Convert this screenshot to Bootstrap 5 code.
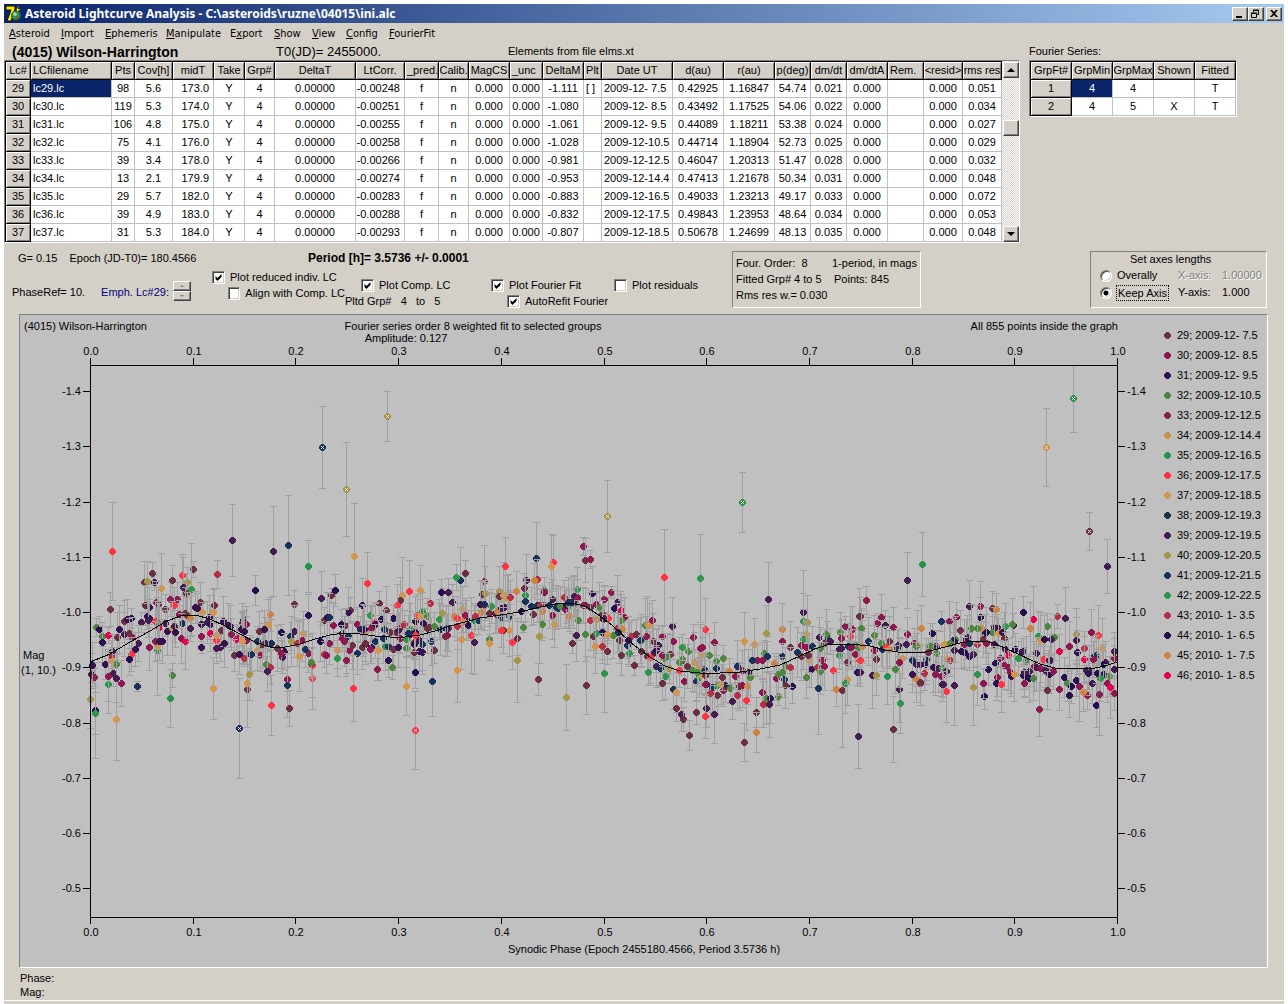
<!DOCTYPE html>
<html lang="en">
<head>
<meta charset="utf-8">
<meta name="viewport" content="width=device-width, initial-scale=1">
<title>Asteroid Lightcurve Analysis - C:\asteroids\ruzne\04015\ini.alc</title>
<link href="https://cdn.jsdelivr.net/npm/bootstrap@5.3.0/dist/css/bootstrap.min.css" rel="stylesheet">
<script src="https://cdn.jsdelivr.net/npm/bootstrap@5.3.0/dist/js/bootstrap.bundle.min.js"></script>
<style>
:root{--face:#d4d0c8;--navy:#0a246a;--shade:#808080}
body{background:#fff;color:#000;font-family:"Liberation Sans",Arial,sans-serif;font-size:11px;line-height:14px}
.app-window{background:var(--face);margin:4px 4px 0;min-height:calc(100vh - 4px)}
.title-bar{height:19px;background:linear-gradient(90deg,#0a246a,#a6caf0);color:#fff;font:bold 12px/19px "Noto Sans",sans-serif;padding:0 2px 0 1px}
.title-bar svg{width:17px;height:17px;margin-right:3px}
.win-btn{width:16px;height:14px;padding:0;background:var(--face);border:1px solid;border-color:#fff #404040 #404040 #fff;box-shadow:inset -1px -1px var(--shade);display:block;line-height:0;border-radius:0}
.win-btn svg{width:14px;height:12px;margin:0;display:block}
.win-close{margin-left:2px}
.menu-strip{display:grid;grid-template-columns:52px 44px 61px 64px 44px 38px 34px 43px auto;height:22px;padding-left:5px;font:11px/21px "DejaVu Sans Condensed","DejaVu Sans",sans-serif}
.menu-strip a{color:#000;text-decoration:none}
.menu-strip a::first-letter{text-decoration:underline}
.menu-strip .mid-key::first-letter{text-decoration:none}
.caption-row{height:15px;line-height:13px;white-space:nowrap}
.obj-name{font:bold 14px/15px "Liberation Sans",sans-serif;width:272px;padding-left:8px}
.epoch-zero{font-size:13px;line-height:14px;width:232px}
.sunken{border:1px solid;border-color:var(--shade) #fff #fff var(--shade)}
.grid-wrap{border:1px solid;border-color:var(--shade) #fff #fff var(--shade);background:#fff}
.data-grid{table-layout:fixed;border-collapse:separate;border-spacing:0;border-left:1px solid #000;border-top:1px solid #000;background:#fff}
.data-grid th,.data-grid td{font-weight:400;height:18px;line-height:17px;padding:0;text-align:center;white-space:nowrap;overflow:hidden;border-right:1px solid silver;border-bottom:1px solid silver}
.data-grid th{background:var(--face);border-right-color:#000;border-bottom-color:#000;box-shadow:inset 1px 1px #fff,inset -1px -1px var(--shade)}
.data-grid .lf{text-align:left;padding-left:2px}
.data-grid .rt{text-align:right;padding-right:4px}
.data-grid td.picked{background:var(--navy);color:#fff}
.series-list{margin-left:9px}
.scroll-rail{width:17px;padding:1px 0 0 1px;background:repeating-conic-gradient(#fff 0 25%,#d4d0c8 0 50%) 0 0/2px 2px}
.rail-btn{width:16px;height:16px;padding:0;border:1px solid;border-color:#fff #404040 #404040 #fff;background:var(--face);box-shadow:inset -1px -1px var(--shade);display:flex;align-items:center;justify-content:center}
.rail-gap{height:42px}
.ctl{display:flex;align-items:center;height:16px;white-space:nowrap}
.ctl input{appearance:none;margin:0 5px 0 0;width:13px;height:13px;background:#fff;border:1px solid;border-color:var(--shade) #fff #fff var(--shade);box-shadow:inset 1px 1px #404040,inset -1px -1px #d4d0c8}
.ctl input[type=checkbox]:checked{background:#fff url("data:image/svg+xml,%3Csvg xmlns='http://www.w3.org/2000/svg' viewBox='0 0 11 11'%3E%3Cpath d='M2.5 4v3l2 2 4-4V2l-4 4z'/%3E%3C/svg%3E")}
.ctl input[type=radio]{border-radius:50%;width:12px;height:12px}
.ctl input[type=radio]:checked{background:radial-gradient(#000 0 2px,#fff 3px)}
.spin-btn{display:block;width:18px;height:10px;padding:0;background:var(--face);border:1px solid;border-color:#fff #404040 #404040 #fff;box-shadow:inset -1px -1px var(--shade);line-height:0}
.emph{color:navy}
.fit-epoch{width:304px;padding-left:14px;white-space:nowrap}
.set-left{width:208px}
.set-a{width:133px}.set-b{width:146px}.set-c{width:123px}.set-d{width:114px}
.group-range{line-height:16px;white-space:pre}
.period{font:bold 12px/14px "Liberation Sans",sans-serif;white-space:nowrap}
.fit-info{width:189px;height:57px;padding:3px 3px;line-height:16px}
.fit-info div div:first-child{width:98px}
.axes-box{width:177px;height:57px;padding-left:9px;margin-right:17px;line-height:17px}
.axes-title{padding-left:30px;line-height:15px}
.axes-box .ctl{height:17px}
.axis-mode{width:78px}
.axis-name{width:44px}
.off{color:var(--shade);text-shadow:1px 1px #fff}
.focus-box{outline:1px dotted #000;padding:0 1px;line-height:14px}
.plot-pane{background:silver;margin:5px 16px 0 15px}
.plot-pane svg{display:block;width:100%;height:auto}
.plot-pane text{font-family:"Liberation Sans",Arial,sans-serif;font-size:11px}
.foot{padding:3px 0 1px 16px;border-bottom:1px solid #fff}
</style>
</head>
<body>
<main class="app-window">
  <header class="title-bar d-flex align-items-center">
    <svg viewBox="0 0 17 17" aria-hidden="true"><path d="M1 1h9v3L6 16H2L6 5H1z" fill="#ffe600" stroke="#111" stroke-width="1"/><circle cx="11" cy="10.500" r="4.500" fill="#2f8f50" stroke="#163" stroke-width="1"/><circle cx="10" cy="9" r="2" fill="#a5d0ad"/><path d="M11 5l3-5-1 4h3l-5 4 1-3z" fill="#ff0" stroke="#332" stroke-width=".5"/><path d="M11 11l2 1-2 3z" fill="#d22"/></svg>
    <span class="flex-grow-1 text-nowrap">Asteroid Lightcurve Analysis - C:\asteroids\ruzne\04015\ini.alc</span>
    <button class="win-btn" aria-label="Minimize"><svg viewBox="0 0 14 12"><path d="M3 8h6v2H3z"/></svg></button>
    <button class="win-btn" aria-label="Restore"><svg viewBox="0 0 14 12" fill="none" stroke="#000"><path d="M4.500 4V2.500h5v4H8M4 2h6M2.500 5.500h5v4h-5zM2 5h6"/></svg></button>
    <button class="win-btn win-close" aria-label="Close"><svg viewBox="0 0 14 12"><path d="M3 2h2l2 2 2-2h2L8 5.500 11 9H9L7 7 5 9H3l3-3.500z"/></svg></button>
  </header>
  <nav class="menu-strip">
    <a href="#">Asteroid</a><a href="#">Import</a><a href="#">Ephemeris</a><a href="#">Manipulate</a><a href="#" class="mid-key">E<u>x</u>port</a><a href="#">Show</a><a href="#">View</a><a href="#">Config</a><a href="#">FourierFit</a>
  </nav>

  <div class="d-flex align-items-start">
    <section>
      <div class="caption-row d-flex"><div class="obj-name">(4015) Wilson-Harrington</div><div class="epoch-zero">T0(JD)= 2455000.</div><div>Elements from file elms.xt</div></div>
      <div class="grid-wrap d-flex">
        <table class="data-grid" id="lcGrid"></table>
        <div class="scroll-rail d-flex flex-column">
          <button class="rail-btn" aria-label="Scroll up"><svg width="8" height="4"><path d="M0 4l4-4 4 4z"/></svg></button>
          <div class="rail-gap"></div>
          <button class="rail-btn" aria-label="Scroll thumb"></button>
          <button class="rail-btn mt-auto" aria-label="Scroll down"><svg width="8" height="4"><path d="M0 0l4 4 4-4z"/></svg></button>
        </div>
      </div>
    </section>
    <section class="series-list">
      <div class="caption-row">Fourier Series:</div>
      <div class="grid-wrap"><table class="data-grid" id="fourierGrid"></table></div>
    </section>
  </div>

  <section class="d-flex align-items-start pt-2">
    <div>
      <div class="d-flex">
        <div class="fit-epoch d-flex"><span>G= 0.15</span><span class="ms-2 ps-1">Epoch (JD-T0)= 180.4566</span></div>
        <div class="period">Period [h]= 3.5736 +/- 0.0001</div>
      </div>
      <div class="d-flex">
        <div class="set-left d-flex pt-3 ps-2 text-nowrap">
          <span class="pt-1">PhaseRef= 10.</span>
          <span class="ms-3 pt-1 emph">Emph. Lc#29:</span>
          <span class="ms-1"><button class="spin-btn" aria-label="Next curve"><svg width="4" height="2"><path d="M0 2l2-2 2 2z" fill="#808080"/></svg></button><button class="spin-btn" aria-label="Previous curve"><svg width="4" height="2"><path d="M0 0l2 2 2-2z" fill="#808080"/></svg></button></span>
        </div>
        <div class="set-a pt-1"><label class="ctl"><input type="checkbox" checked>Plot reduced indiv. LC</label><label class="ctl ms-3"><input type="checkbox">Align with Comp. LC</label></div>
        <div class="set-b pt-2"><label class="ctl mt-1 ms-3"><input type="checkbox" checked>Plot Comp. LC</label><div class="group-range">Pltd Grp#   4   to   5</div></div>
        <div class="set-c pt-2"><label class="ctl mt-1"><input type="checkbox" checked>Plot Fourier Fit</label><label class="ctl ms-3"><input type="checkbox" checked>AutoRefit Fourier</label></div>
        <div class="set-d pt-2"><label class="ctl mt-1"><input type="checkbox">Plot residuals</label></div>
      </div>
    </div>
    <div class="ms-1"><div class="fit-info sunken text-nowrap"><div class="d-flex"><div>Four. Order:&nbsp; 8</div><div>1-period, in mags</div></div><div class="d-flex"><div>Fitted Grp# 4 to 5</div><div>Points: 845</div></div><div>Rms res w.= 0.030</div></div></div>
    <div class="axes-box sunken ms-auto text-nowrap">
      <div class="axes-title">Set axes lengths</div>
      <div class="d-flex"><div class="axis-mode"><label class="ctl"><input type="radio" name="axisMode"><span>Overally</span></label></div><div class="axis-name off">X-axis:</div><div class="off">1.00000</div></div>
      <div class="d-flex"><div class="axis-mode"><label class="ctl"><input type="radio" name="axisMode" checked><span class="focus-box">Keep Axis</span></label></div><div class="axis-name">Y-axis:</div><div>1.000</div></div>
    </div>
  </section>

  <section class="plot-pane sunken"><svg id="plot" viewBox="20 316 1247 652" role="img" aria-label="Composite lightcurve"></svg></section>
  <footer class="foot"><div>Phase:</div><div>Mag:</div></footer>
</main>
<script>
function buildGrid(id, heads, widths, aligns, rows){
  const t=document.getElementById(id);
  t.style.width=(widths.reduce((a,b)=>a+b)+1)+'px';
  const esc=s=>s.replace('<','&lt;').replace('>','&gt;');
  t.innerHTML='<colgroup>'+widths.map(w=>`<col style="width:${w}px">`).join('')+'</colgroup><thead><tr>'+
    heads.map((h,i)=>`<th scope="col"${/^(LCf|_|Rem)/.test(h)?' class="lf"':''}>${esc(h)}</th>`).join('')+'</tr></thead><tbody>'+
    rows.map((r,k)=>'<tr>'+r.map((c,i)=>i==0?`<th scope="row">${c}</th>`:`<td class="${aligns[i]||''}${k==0&&i==1?' picked':''}">${c}</td>`).join('')+'</tr>').join('')+'</tbody>';
}
const L='lf',R='rt';
const lc=`29,98,5.6,173.0,-0.00248,-1.111,2009-12- 7.5,0.42925,1.16847,54.74,0.021,0.051
30,119,5.3,174.0,-0.00251,-1.080,2009-12- 8.5,0.43492,1.17525,54.06,0.022,0.034
31,106,4.8,175.0,-0.00255,-1.061,2009-12- 9.5,0.44089,1.18211,53.38,0.024,0.027
32,75,4.1,176.0,-0.00258,-1.028,2009-12-10.5,0.44714,1.18904,52.73,0.025,0.029
33,39,3.4,178.0,-0.00266,-0.981,2009-12-12.5,0.46047,1.20313,51.47,0.028,0.032
34,13,2.1,179.9,-0.00274,-0.953,2009-12-14.4,0.47413,1.21678,50.34,0.031,0.048
35,29,5.7,182.0,-0.00283,-0.883,2009-12-16.5,0.49033,1.23213,49.17,0.033,0.072
36,39,4.9,183.0,-0.00288,-0.832,2009-12-17.5,0.49843,1.23953,48.64,0.034,0.053
37,31,5.3,184.0,-0.00293,-0.807,2009-12-18.5,0.50678,1.24699,48.13,0.035,0.048`.split('\n').map((s,i)=>{
  const v=s.split(',');
  return [v[0],`lc${v[0]}.lc`,v[1],v[2],v[3],'Y','4','0.00000',v[4],'f','n','0.000','0.000',v[5],i?'':'[ ]',v[6],v[7],v[8],v[9],v[10],'0.000','','0.000',v[11]];
});
buildGrid('lcGrid',['Lc#','LCfilename','Pts','Cov[h]','midT','Take','Grp#','DeltaT','LtCorr.','_pred.','Calib.','MagCS','_unc','DeltaM','Plt','Date UT','d(au)','r(au)','p(deg)','dm/dt','dm/dtA','Rem.','<resid>','rms res'],
 [25,81,23,38,41,31,30,81,49,34,30,41,33,41,18,71,51,51,36,36,41,36,39,39],
 [0,L,0,0,R,0,0,0,R,0,0,0,0,0,L,L,0,0,0,0,0,0,0,0],lc);
buildGrid('fourierGrid',['GrpFt#','GrpMin','GrpMax','Shown','Fitted'],[41,41,41,41,41],[],[['1','4','4','','T'],['2','4','5','X','T']]);

// Series a..r are light curves 29..46
const colors='#6b2f42 #8f174f #35124f #4c863f #871f50 #c2944a #22954a #ff3344 #d29549 #1b3347 #431d4f #a59549 #17315a #2f954a #b62f45 #260d50 #d08240 #e7004f'.split(' ');
const dates='2009-12- 7.5|2009-12- 8.5|2009-12- 9.5|2009-12-10.5|2009-12-12.5|2009-12-14.4|2009-12-16.5|2009-12-17.5|2009-12-18.5|2009-12-19.3|2009-12-19.5|2009-12-20.5|2009-12-21.5|2009-12-22.5|2010- 1- 3.5|2010- 1- 6.5|2010- 1- 7.5|2010- 1- 8.5'.split('|');
// Phase segments: origin x, origin y, then "series x y [error]" in thirds of a unit
const segments=[[80,540,`h97 37 147,a91 211 50,d49 265 28,p59 272 40,d68 293 30,r85 289 25,p67 310 60,a112 295,c118 272,k134 286,a133 247,p155 238 30,c143 240 60,k184 250 30,a148 283 45,b157 296,k175 313,c166 331,h154 345 50,p148 361 48,b125 433 69,g85 436 87,i109 541 123,l31 481 87,p46 514 144,n46 523 63,k37 378 35,k34 406 25,e43 415 28,c76 376 45,k97 337 50,o95 352,i97 366,d110 376 50,k100 402,b86 412,k109 418,c37 379,m172 442 15,a193 130 63,l202 127 60,c224 130 25,a217 103 33,i245 148 105,b230 190,a197 199 60,c208 205,a235 196 50,a256 211 45,c202 232 40,c208 238,k205 244,e272 181 50,e293 181 50,h284 199 55,h307 109 63,l322 131 45,k310 146 90,a319 163 60,a340 91 24,n334 151 138,a277 124 45,c346 205,a361 190 60,i367 219 30,c352 208,k256 254,h227 246 60,r238 265,d236 253 60,c262 278,b208 325,c247 307,n232 334 30,i232 322 147,e226 308,c238 307,m307 253,i277 268 80,k284 262,c287 280,b298 226,a316 223,b304 298,r317 307 85,a323 230,q332 238 70,k331 268 25,c365 256 30,b364 291 40,c365 325 18,c388 236,k382 250,c391 256,r391 284,h409 303,i409 289 55,k409 328,k422 325,a424 274,a403 199 50,i401 219 70,o412 106 42,c430 246,c433 313,c446 259,c452 262,i401 448 94,d277 409 36,g271 478 87,k457 4 108,p526 154 45,k580 37 135,m625 19 150,g685 82 78,c490 241 25,a488 253,b499 255,c484 271,e454 286,b472 298,r469 301,q490 299,b499 304,i487 306,c493 277,a463 349 48,c478 346,o493 358 25,c512 346,m514 346,i532 334 60,b541 349,m532 306,b550 319,k556 313,m574 313,a592 328,a547 319,a538 277,c553 271,q571 226 50,i565 256 75,p604 280 25,a643 196 42,c613 337,k607 355,b604 343,m631 292,k643 277,l634 307,o652 313,i670 283,b667 304,p685 229 63,i658 352 105,b685 343,m676 331,d559 376 25,o571 385,k562 397 60,a502 451 114,i502 433 50,l508 407 77,b622 421 36,m622 439 96,h574 499 90,a628 508 54,h697 418 93,h697 379 95,a694 373,d695 370,k724 178 81,a754 169 20,p766 154 48,a733 244,p742 235,m748 235,b760 259,b748 313,p721 307,i772 334 54,o733 346 40,b739 349,n772 358 54,a796 259,b800 364,m787 283`],
[340,540,`i43 52 160,h82 133 92,a31 214,c25 221,p67 199 80,a118 193 36,a139 214,i187 169 113,a181 184,h172 199,h208 157 92,i241 154 75,n91 229 30,a97 262,h107 250,b52 256,a16 259,p4 256,m61 271,c70 274,i79 277 30,c73 271,b94 268,p124 240 40,p160 238 40,c106 256,m133 272,a151 280,a169 280,b178 268,b181 298,o193 256,n211 270,c226 247,m211 286,k175 274,h232 229,n247 217,d262 232,i241 232,c250 254,o271 193 70,m25 292,b7 298,b12 308,a37 319,a67 325,m52 343,c76 316,a76 313,m106 307,c94 325,b91 331,b28 334,b20 364 38,i115 334 90,m130 298,n136 322,m145 322,a160 331,c175 325,d199 328,n199 300,a223 310,c223 316,k238 304,m247 316,m274 307,a223 340,c247 340,c238 337,a283 334 40,p145 364 50,b112 391 33,d157 385 35,i199 442 87,p226 400 47,m277 427 105,h40 448 99,c226 280,m205 282,h226 289,a268 265,d283 262,m301 270,n298 241 60,l307 223 75,a262 268,p304 160 40,k325 160 42,k337 190 55,m361 124 99,n349 115 40,a376 103 38,i367 211 70,q344 232 60,h352 238 65,o352 262 70,a325 267,m319 268,a316 292 60,b322 289,c380 240,q370 247,b376 228,p385 259 45,h394 289 115,i364 301 90,i352 394 96,k403 310 95,n403 244,m415 244,q424 220 50,o406 232,e433 127 107,a427 166 38,l436 163 80,h434 198,c421 196,n454 202 50,m433 196,a448 223,c466 223,b469 226,q472 217,m484 235,c493 205,k484 208,n508 228,m508 232,l478 157 75,a478 172 90,i490 169 100,n505 175 70,i502 178 70,o512 175 50,h496 82 88,q529 157 60,i508 274 78,a490 274,h484 274 50,d448 301,i448 313 50,h517 310 81,a532 298 50,p544 217 30,l532 364 126,d550 265 15,k559 124 78,a553 149 45,n556 169 50,m556 187,m589 58 107,o592 121 60,q583 124 50,a580 226 30,m574 201,m592 199,o600 200,a613 199,d613 154,b613 160 45,q607 217,d607 256 48,l598 292 82,a595 421 48,i643 256 70,b637 229,k637 181 60,m628 199,m649 205,m655 208,d661 202 60,h640 70 80,i634 82 96,o673 175 50,b676 211,c679 199,d688 199,q688 232,a706 190,c700 189,m685 190,m694 189,n712 151,k703 172,k712 175 30,b712 178,d715 244 60,a697 313 30,k709 289 78,a730 199,b736 199,d736 286 82,b730 22 27,a736 64 66,b751 61 27,p757 163 80,a751 205,b793 181,b769 196,d778 205,o751 244 90,q769 241 80,a787 226,c791 241,a760 292,n769 283,p787 280,i766 322 82,o787 322,a802 337 40,l679 475 99,a739 439 87,n793 403 117`],
[600,540,`b13 181 40,b34 160 17,k52 190 82,p43 208 55,o61 217 60,r64 214,h25 238 65,a7 226,k10 238,b73 235 60,d64 244 60,o52 268,q67 270,d40 289 70,a58 304,p7 280,i21 286,o7 322 40,a22 337 25,a64 349 60,m55 280,c88 301,o94 292,a109 286,m82 319,n88 343 40,d124 304,c85 304,m120 304,a103 379 30,n136 259 82,q142 256 85,i148 259,b157 244 60,b187 292 30,k217 262 86,b139 292 60,a160 307 85,c175 319,b169 328,b220 307,a124 337,a142 352,k160 343,h151 355,d193 358,a211 346 60,d202 352,c169 334,n146 400 39,m169 382,k169 382,m181 388,b187 349,l208 388,n196 412 70,a187 433 50,m219 452 60,i229 460 60,b253 427 60,k244 367,d247 361,d238 370,n247 325 40,d265 337 40,b280 295 40,h193 115 145,n301 118 132,h316 271 93,b301 328,b343 310 60,d328 349 65,i307 349 55,d349 367 50,d370 358 40,i283 370 90,a262 382,d277 394,m289 427 60,n298 415,i304 409,m313 391,i295 388,h238 394 50,a316 409 60,m349 388 40,n292 400,b307 325 60,c319 436,m337 445,b316 436,o331 463,n352 439,i364 436,a352 469,k376 439,e370 454,d391 448,a367 415,b406 412 40,q388 397 40,m412 382,b427 394 60,a418 442,c445 400,b427 439,q442 442 55,d451 415,o412 469 40,h439 484 90,k397 487 53,k343 526 87,k319 508,h316 532 66,a289 520 35,a229 508 38,k244 526 50,a250 541 35,a268 589 45,a433 610 57,a469 520 45,q469 580 60,k505 181 111,i433 307 87,i463 316 78,l499 283 85,d493 343 40,b487 364,b472 364,m502 352 45,m457 364,q523 373 30,q547 271 78,a571 325 78,b547 307,m547 352 40,b487 460 40,d499 478,c512 478,o490 496,k508 496 99,d535 472 28,b529 418,d535 406,d556 382,m553 421,a556 439 69,p577 442,o571 385 60,d547 400,k610 220 126,n610 247 85,l622 250 81,i619 286,n610 301 90,i628 364 80,b604 319,m592 340,a604 352,b619 325,d619 415,m637 322,c634 391,o652 385 60,a625 349,k658 295 60,m682 295,d679 286 75,a673 313,k691 307,b667 364,b673 382,d661 397,d661 328,m655 448 138,h700 394 60,q709 451 50,a727 454 171,i742 421 78,n736 433 90,n718 349 40,k718 331 60,b736 262 30,b757 271 70,h751 292 90,d721 280,b724 298,a742 370 66,m748 325,d766 319,k724 328,b766 346,d787 322,q787 322 50,h778 364 70,p772 400 40,a778 232 84,b799 184 42,d784 268 60,m805 307,k775 592 96,m745 322,b754 325,d775 325`],
[860,540,`b19 184 42,a0 232,d4 268,b52 253 30,b64 235 70,k76 259 45,b100 265 60,d43 289 60,m25 307,q7 322,k0 400,h1 364,b43 334,a49 361 60,d64 313,m67 331,a88 307 75,h79 325,q88 331,m112 328,k115 319,b142 286 50,i127 358 60,d106 391 72,k37 409 98,l49 409 60,g82 412 84,k118 451 99,n121 493 90,a100 571 99,k142 124 84,g187 76 96,q184 268 69,i172 319 105,b163 313,k139 316,d169 322,b118 370,m157 364,c169 376,m199 361,c196 376,k181 376,c157 406 55,o193 403,q169 421 70,b181 433 66,a181 430 30,p217 283 30,d211 322 70,k229 322,a205 340,d229 343,c220 385,k235 388,n247 388,b226 406,b244 412,k259 397,i262 361,o272 364,i253 316 70,m244 247 30,b268 247 60,b289 235,a301 274 60,k328 202 78,b361 202 75,p361 235 60,a397 208 51,q409 211 48,k403 265 60,k412 265,n436 262 70,k460 259 35,d457 256,q364 268 40,d334 268,d352 268,k322 295,c319 301,m376 283,a370 301,d397 280,i415 283,c427 280,a433 298,p379 280,d286 301,m280 304,c283 307,d271 313,k283 334,p304 337,p313 340,p328 352,k340 346,b313 316,m328 313,o352 316,b379 313,k403 316,b421 358,r445 349 50,k436 331,p466 331,c484 340,k490 337,n475 358 50,d499 367,p406 373 50,b433 379,b445 385,b451 400,c454 412,b412 415,p409 433 50,r424 436,h424 436 84,i463 406 81,p385 391,n352 406 93,p373 472 40,l340 445 114,k283 439 120,h259 457 93,p247 436 50,b370 433,k250 436,p490 220 48,r520 241 99,q511 268,k616 238 93,o592 232 36,d562 262 40,d583 295 70,g535 292 75,i541 304 85,p553 301,k574 301 60,b628 322 75,r598 337 50,l649 286 78,k649 304,c652 340,o673 328 50,b694 280 69,h715 289 90,i727 328 90,k763 337 57,b763 358,r673 361 70,k709 349 60,m703 352,b700 361,k529 343,h550 361,p568 364,k571 364,b523 382,k529 385,b541 388,e565 397,p568 406,b580 397,k556 394,k508 397,p490 409,p499 412,k493 400,p508 418,d520 418,b493 433 40,a562 454 57,b598 451,e538 511 81,p613 415,d622 433,p634 442,p628 469 66,p649 424,b658 442 105,e682 469,q670 460 57,k679 394,k688 394,k697 433 60,p709 499 66,p712 403,c730 406,k736 370,p730 376,n721 418 70,d748 412 60,b742 433,e718 466 123,r751 445 93,k763 391 72,b763 463,c685 403,k742 82 81`],
[340,430,`l19 181 141 x,l802 262 108 x`],[720,360,`n67 430 90 x,n1060 118 102 x,i979 265 117 x,a1108 517 57 x`],[0,315,`m967 400 123 x,l1162 307 75 x,k697 679 108`],[80,540,`m478 568 150 x`],[340,540,`h226 574 117 x`]];
const out=[],line=(d,c)=>out.push(`<path d="${d}" fill="none" stroke="${c}" shape-rendering="crispEdges"/>`);
const text=(x,y,s,a='start')=>out.push(`<text x="${x}" y="${y}" text-anchor="${a}" xml:space="preserve">${s}</text>`);
const dot=(x,y,c)=>out.push(`<path d="M${x-1} ${y-3}h3v1h1v1h1v3h-1v1h-1v1h-3v-1h-1v-1h-1v-3h1v-1h1z" fill="${c}" shape-rendering="crispEdges"/>`);
let n=0;
for(const [x0,y0,s] of segments) for(const item of s.replace(/\n/g,'').split(',')){
  const p=item.slice(1).split(' '),c=colors[item.charCodeAt(0)-97];
  const x=Math.floor(x0+p[0]/3),y=Math.floor(y0+p[1]/3);
  const e=Math.round((p[2]?+p[2]:38+(++n*37%41))/3);
  const top=Math.max(366,y-e);
  line(`M${x+.5} ${top}V${y+e}M${x-3} ${top+.5}h7M${x-3} ${y+e+.5}h7`,'#a0a0a0');
  dot(x,y,c);
  if(p[3]) out.push(`<path d="M${x-1} ${y-1}h1v1h1v-1h1v1h-1v1h1v1h-1v-1h-1v1h-1v-1h1v-1h-1z" fill="#e6e6e6" shape-rendering="crispEdges"/>`);
}
const fit=[90,663,110,655,130,643,150,632,165,623,180,617,195,616,210,620,225,627,240,635,255,643,270,648,285,648,300,645,315,640,330,636,345,634,360,635,375,637,390,638,405,638,420,636,435,632,450,627,465,623,480,619,500,616,520,613,540,608,555,605,570,604,585,607,597,615,612,626,630,643,650,658,665,667,680,672,700,674,720,674,740,673,760,670,780,666,800,657,815,650,830,645,850,645,870,647,885,651,905,654,925,653,945,648,960,644,975,642,990,643,1005,649,1020,656,1040,665,1055,669,1075,670,1095,669,1105,667,1117,663];
out.push(`<polyline points="${fit}" fill="none" stroke="#000" shape-rendering="crispEdges"/>`);
line('M90 366.500H1118M90 918.500H1118M90.500 359V925M1117.500 359V925','#000');
for(let i=0;i<=10;i++){
  const x=90+Math.round(i*102.7),s=(i/10).toFixed(1);
  line(`M${x+.5} 359v8M${x+.5} 918v7`,'#000');
  text(x+1,356,s,'middle');text(x+1,937,s,'middle');
}
for(let i=0;i<10;i++){
  const y=392+Math.round(i*55.25),s='-'+(1.4-i/10).toFixed(1);
  line(`M83 ${y+.5}h7M1118 ${y+.5}h7`,'#000');
  text(81,y+4,s,'end');text(1127,y+4,s);
}
text(24,331,'(4015) Wilson-Harrington');
text(473,331,'Fourier series order 8 weighted fit to selected groups','middle');
text(406,343,'Amplitude: 0.127','middle');
text(1118,331,'All 855 points inside the graph','end');
text(23,660,'Mag');text(21,675,'(1, 10.)');
text(644,954,'Synodic Phase (Epoch 2455180.4566, Period 3.5736 h)','middle');
dates.forEach((d,i)=>{dot(1167,336+20*i,colors[i]);text(1177,340+20*i,(29+i)+'; '+d);});
document.getElementById('plot').innerHTML=out.join('');
</script>
</body>
</html>
